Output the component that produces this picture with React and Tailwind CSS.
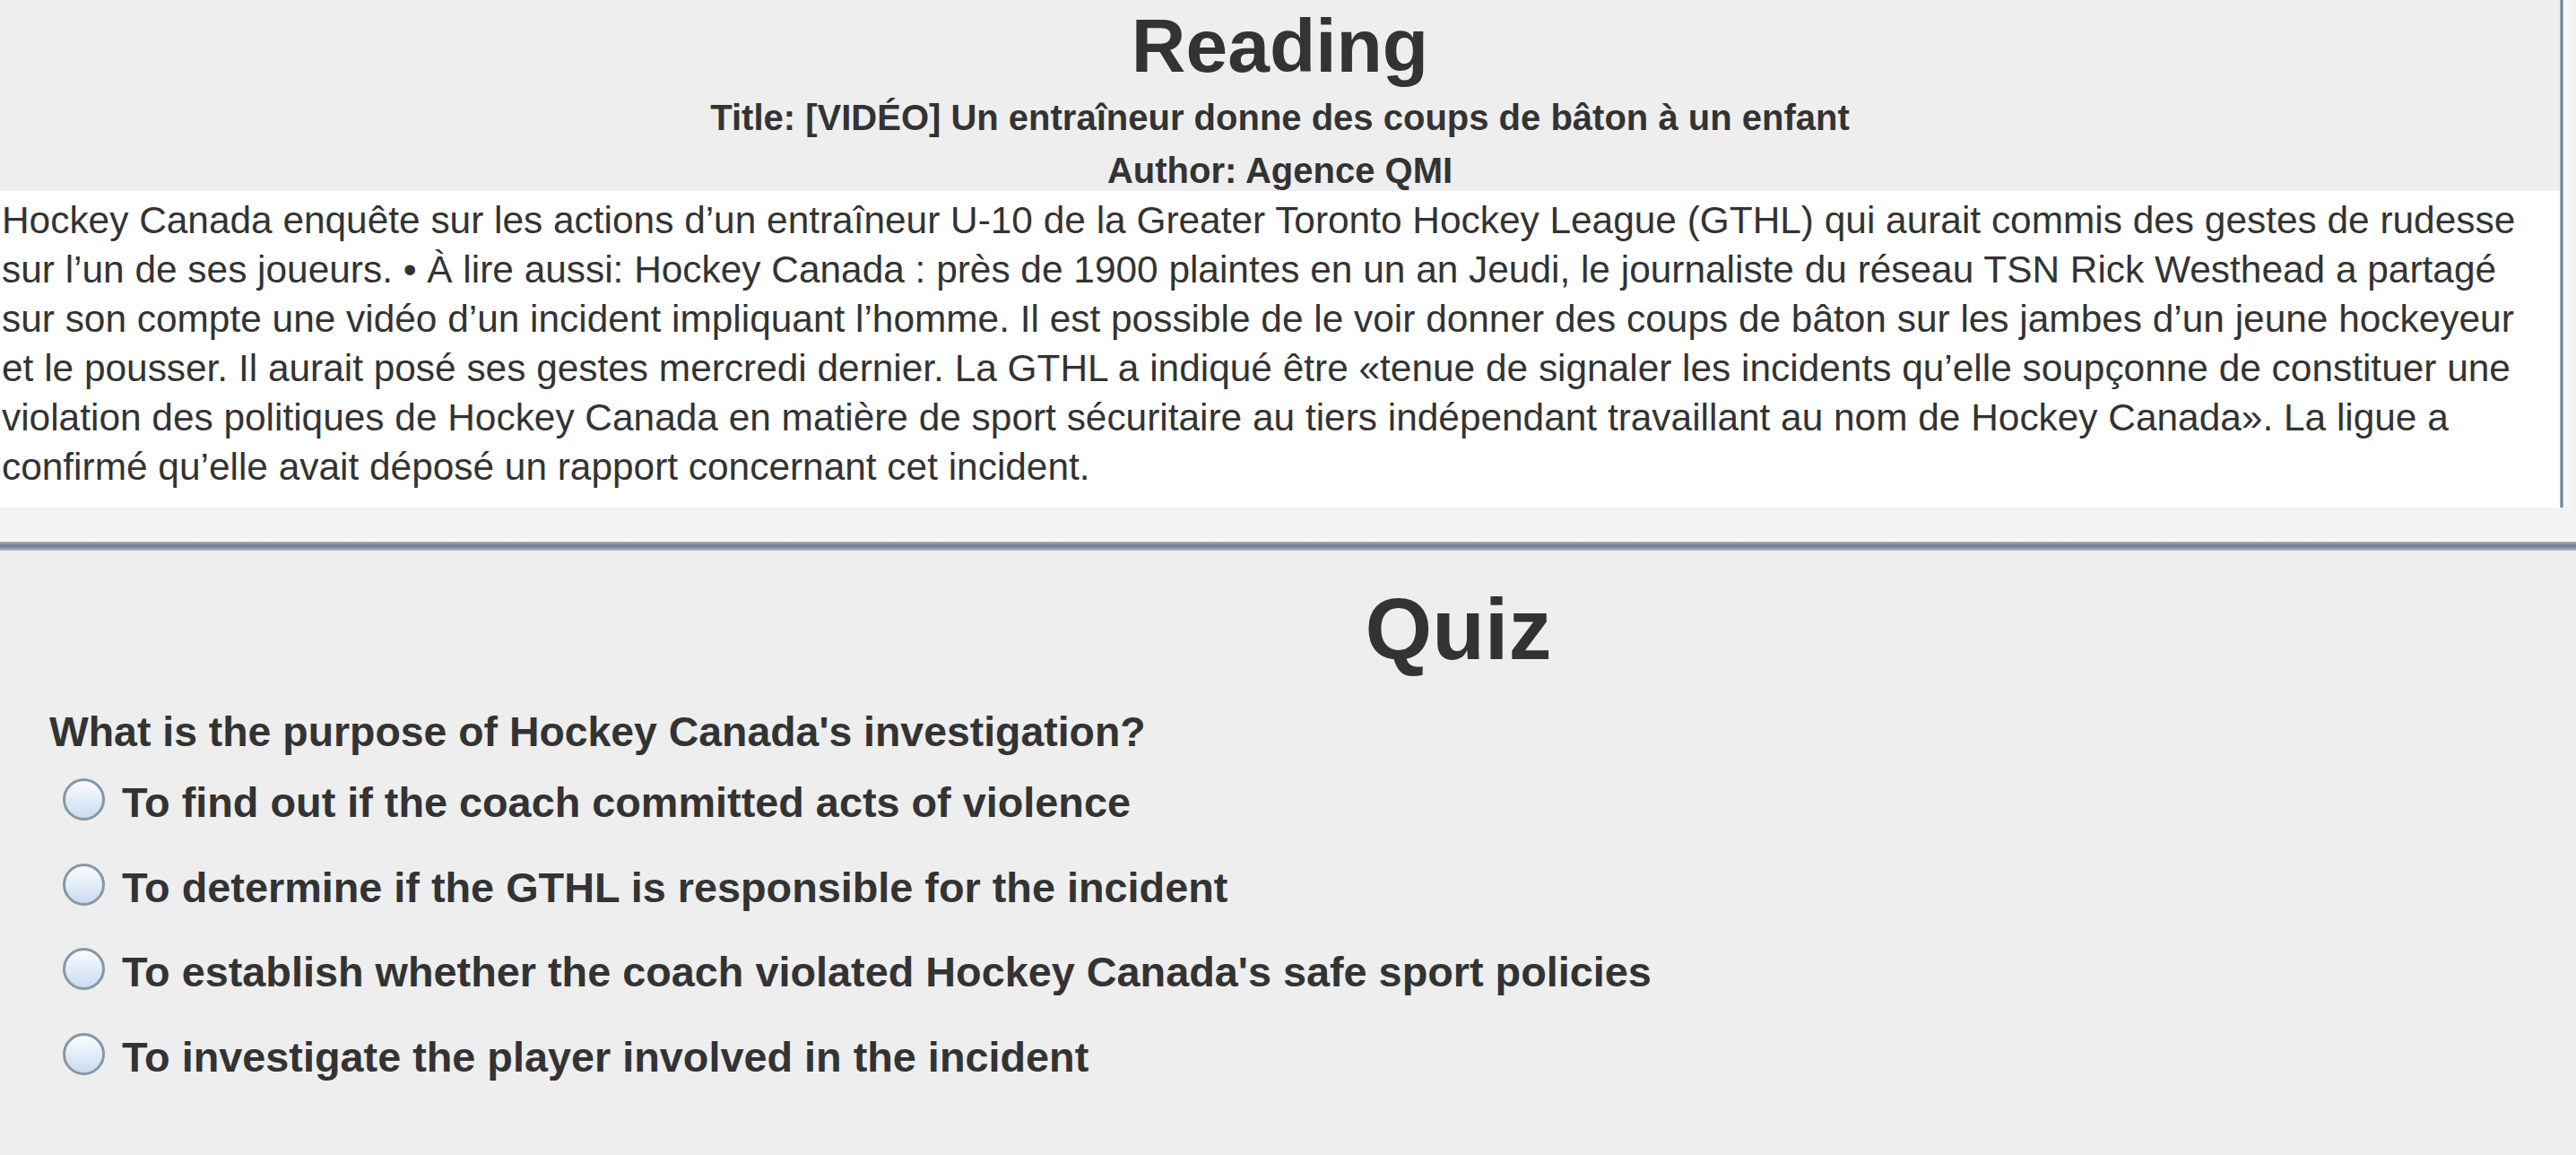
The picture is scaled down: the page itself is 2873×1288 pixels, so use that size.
import React, { useState } from 'react';

const bodyLines = [
  'Hockey Canada enquête sur les actions d’un entraîneur U-10 de la Greater Toronto Hockey League (GTHL) qui aurait commis des gestes de rudesse',
  'sur l’un de ses joueurs. • À lire aussi: Hockey Canada : près de 1900 plaintes en un an Jeudi, le journaliste du réseau TSN Rick Westhead a partagé',
  'sur son compte une vidéo d’un incident impliquant l’homme. Il est possible de le voir donner des coups de bâton sur les jambes d’un jeune hockeyeur',
  'et le pousser. Il aurait posé ses gestes mercredi dernier. La GTHL a indiqué être «tenue de signaler les incidents qu’elle soupçonne de constituer une',
  'violation des politiques de Hockey Canada en matière de sport sécuritaire au tiers indépendant travaillant au nom de Hockey Canada». La ligue a',
  'confirmé qu’elle avait déposé un rapport concernant cet incident.',
];

const options = [
  'To find out if the coach committed acts of violence',
  'To determine if the GTHL is responsible for the incident',
  "To establish whether the coach violated Hockey Canada's safe sport policies",
  'To investigate the player involved in the incident',
];

const Radio = ({ checked }) => (
  <div className="w-[47px] h-[47px] shrink-0 rounded-full border-[3px] border-[#8797a7] bg-linear-to-b from-[#fbfcfe] to-[#cadcf0] flex items-center justify-center">
    {checked && <div className="w-[17px] h-[17px] rounded-full bg-[#3b5a7a]" />}
  </div>
);

const App = () => {
  const [answer, setAnswer] = useState(null);

  return (
    <div
      className="w-[2873px] h-[1288px] overflow-hidden bg-[#eeeeee] text-[#333333] flex flex-col"
      style={{ fontFamily: '"Liberation Sans", Arial, sans-serif' }}
    >
      {/* reading pane */}
      <div className="h-[600px] flex flex-col shrink-0">
        <div className="h-[566px] flex">
          <div className="flex-1 flex flex-col">
            <div className="h-[213px] flex flex-col items-center">
              <h1 className="mt-[9px] text-[84px] leading-[84px] font-bold">Reading</h1>
              <p className="mt-[18px] text-[40px] leading-[40px] font-bold">
                Title: [VIDÉO] Un entraîneur donne des coups de bâton à un enfant
              </p>
              <p className="mt-[19px] text-[40px] leading-[40px] font-bold">Author: Agence QMI</p>
            </div>
            <div className="flex-1 bg-white pl-[2px] pt-[5px] text-[42.4px] leading-[55px]">
              {bodyLines.map((line, i) => (
                <div key={i} className="whitespace-nowrap">{line}</div>
              ))}
            </div>
          </div>
          <div className="w-[4px] bg-[#76879a] border-x border-[#a2afbc]" />
          <div className="w-[14px] bg-linear-to-r from-[#fafafa] to-[#efefef]" />
        </div>
        <div className="flex-1 bg-[#f2f2f2]" />
      </div>

      {/* split divider */}
      <div className="h-[4px] bg-[#fbf7f4] shrink-0" />
      <div className="h-[10px] shrink-0 bg-linear-to-b from-[#a5b2bf] via-[#6b7e92] to-[#b3bec8]" />

      {/* quiz pane */}
      <div className="flex-1 flex flex-col">
        <div className="flex justify-center pl-[380px]">
          <h2 className="mt-[40px] text-[96px] leading-[96px] font-bold">Quiz</h2>
        </div>
        <div className="pl-[55px] mt-[43px]">
          <p className="text-[46.4px] leading-[46px] font-bold">What is the purpose of Hockey Canada's investigation?</p>
          <div className="mt-[29px] pl-[15px] flex flex-col gap-[43.5px]">
            {options.map((opt, i) => (
              <label key={i} className="flex items-start gap-[19px] cursor-pointer" onClick={() => setAnswer(i)}>
                <Radio checked={answer === i} />
                <span className="mt-[4px] text-[46.8px] leading-[47px] font-bold whitespace-nowrap">{opt}</span>
              </label>
            ))}
          </div>
        </div>
      </div>
    </div>
  );
};

export default App;
